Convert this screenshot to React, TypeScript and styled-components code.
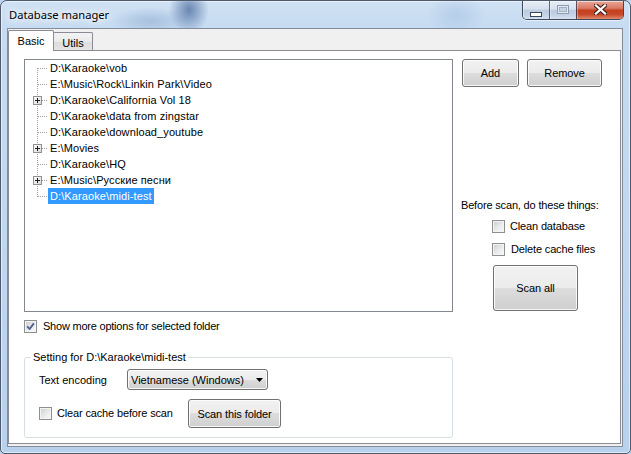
import React from 'react';
import styled, { createGlobalStyle } from 'styled-components';

const Global = createGlobalStyle`
  html, body { margin: 0; padding: 0; background: #bcd4ee; }
  body { font-family: "Liberation Sans", Arial, sans-serif; font-size: 11px; color: #000; }
  #root { width: 631px; height: 454px; }
  * { box-sizing: border-box; }
`;

const Win = styled.div`
  width: 631px;
  height: 454px;
  border: 1px solid #4d5a6c;
  border-radius: 7px 7px 5px 5px;
  background: linear-gradient(180deg, #c7dcf2 0%, #bfd7ef 55%, #b8d1ec 100%);
  display: flex;
  flex-direction: column;
  overflow: hidden;
  box-shadow: inset 0 0 0 1px rgba(255, 255, 255, 0.55);
`;

const TitleBar = styled.div`
  height: 27px;
  flex: none;
  display: flex;
  justify-content: space-between;
  align-items: flex-start;
  padding: 0 6px 0 7px;
  background:
    radial-gradient(ellipse 20px 24px at 188px 9px, rgba(62, 96, 150, 0.7), rgba(62, 96, 150, 0) 100%),
    radial-gradient(ellipse 40px 14px at 150px 20px, rgba(90, 125, 175, 0.3), rgba(90, 125, 175, 0) 100%),
    radial-gradient(ellipse 30px 22px at 455px 14px, rgba(120, 158, 205, 0.25), rgba(120, 158, 205, 0) 100%),
    linear-gradient(180deg, rgba(255, 255, 255, 0.15), rgba(255, 255, 255, 0));
`;

const Title = styled.div`
  font-family: "Noto Sans", "Open Sans", sans-serif;
  font-size: 11.2px;
  line-height: 16px;
  margin-top: 6px;
  padding-left: 1px;
  color: #000;
  text-shadow: 0 0 6px #fff, 0 0 10px #fff, 0 0 14px rgba(255, 255, 255, 0.9);
`;

const CapGroup = styled.div`
  display: flex;
  height: 19px;
  border: 1px solid rgba(36, 48, 68, 0.85);
  border-top: none;
  border-radius: 0 0 5px 5px;
  overflow: hidden;
  box-shadow: 0 1px 0 rgba(255, 255, 255, 0.55);
`;

const CapBtn = styled.div<{ $w: number; $close?: boolean }>`
  width: ${(p) => p.$w}px;
  display: flex;
  align-items: center;
  justify-content: center;
  background: ${(p) =>
    p.$close
      ? 'linear-gradient(180deg, #e8a697 0%, #d97a65 40%, #c4401f 52%, #c9482a 75%, #e08a6c 100%)'
      : 'linear-gradient(180deg, #e6edf6 0%, #d6e1ee 45%, #bccbdf 52%, #c4d3e6 80%, #d4e1f0 100%)'};
  box-shadow: inset 0 1px 0 rgba(255, 255, 255, 0.55), inset 1px 0 0 rgba(255, 255, 255, 0.35);
  & + & {
    border-left: 1px solid rgba(36, 48, 68, 0.7);
  }
`;

const Client = styled.div`
  margin: 0 7px 6px 6px;
  border: 1px solid #828c9a;
  background: #f0f0f0;
  flex: 1;
  min-height: 0;
  display: flex;
  flex-direction: column;
`;

const TabStrip = styled.div`
  display: flex;
  align-items: flex-start;
  height: 22px;
  padding-top: 1px;
  position: relative;
  z-index: 1;
  flex: none;
`;

const Tab = styled.div<{ $active?: boolean; $w: number }>`
  width: ${(p) => p.$w}px;
  height: ${(p) => (p.$active ? 21 : 18)}px;
  margin-top: ${(p) => (p.$active ? 0 : 2)}px;
  margin-left: ${(p) => (p.$active ? 0 : -1)}px;
  border: 1px solid #898c95;
  border-bottom: none;
  border-radius: 2px 2px 0 0;
  background: ${(p) => (p.$active ? '#ffffff' : 'linear-gradient(180deg, #f3f3f3 0%, #ebebeb 50%, #dddddd 51%, #e4e4e4 100%)')};
  position: relative;
  z-index: ${(p) => (p.$active ? 2 : 1)};
  display: flex;
  justify-content: center;
  align-items: center;
  padding-top: ${(p) => (p.$active ? 0 : 2)}px;
  font-size: 11px;
`;

const Page = styled.div`
  margin: -1px 1px 2px 0;
  border: 1px solid #898c95;
  background: #fff;
  flex: 1;
  min-height: 0;
  padding: 8px 0 0 15px;
  display: flex;
  flex-direction: column;
`;

const TopRow = styled.div`
  display: flex;
  gap: 9px;
`;

const Tree = styled.div`
  width: 429px;
  height: 253px;
  border: 1px solid #828790;
  background: #fff;
  display: flex;
  flex-direction: column;
`;

const TreeRow = styled.div`
  display: flex;
  align-items: center;
  height: 16px;
`;

const TreeLabel = styled.span<{ $selected?: boolean }>`
  padding: 0 2px;
  line-height: 16px;
  height: 16px;
  white-space: nowrap;
  font-size: 11px;
  letter-spacing: 0.1px;
  background: ${(p) => (p.$selected ? '#3399ff' : 'transparent')};
  color: ${(p) => (p.$selected ? '#fff' : '#000')};
`;

const Side = styled.div`
  width: 141px;
  display: flex;
  flex-direction: column;
`;

const BtnRow = styled.div`
  display: flex;
  gap: 8px;
`;

const Btn = styled.button<{ $w: number; $h: number }>`
  width: ${(p) => p.$w}px;
  height: ${(p) => p.$h}px;
  border: 1px solid #707070;
  border-radius: 3px;
  padding: 0;
  margin: 0;
  background: linear-gradient(180deg, #f2f2f2 0%, #ebebeb 50%, #dddddd 50%, #cfcfcf 100%);
  box-shadow: inset 0 0 0 1px rgba(255, 255, 255, 0.85);
  font-family: "Liberation Sans", Arial, sans-serif;
  font-size: 11px;
  letter-spacing: -0.1px;
  color: #000;
  flex: none;
`;

const ScanSection = styled.div`
  margin-top: auto;
  margin-bottom: 1px;
  display: flex;
  flex-direction: column;
  padding-left: 30px;
`;

const ScanNote = styled.div`
  margin-left: -31px;
  line-height: 13px;
  height: 13px;
  white-space: nowrap;
  letter-spacing: -0.17px;
  margin-bottom: 8px;
`;

const CheckRow = styled.label<{ $gap?: number; $mt?: number; $w?: number }>`
  display: flex;
  align-items: center;
  gap: ${(p) => p.$gap ?? 5}px;
  height: 13px;
  line-height: 13px;
  margin-top: ${(p) => p.$mt ?? 0}px;
  width: ${(p) => (p.$w ? `${p.$w}px` : 'auto')};
  white-space: nowrap;
  letter-spacing: -0.15px;
  flex: none;
`;

const Box = styled.span`
  width: 13px;
  height: 13px;
  flex: none;
  border: 1px solid #8e8f8f;
  padding: 1px;
  background: linear-gradient(135deg, #cfd1d4 0%, #e9eaeb 55%, #f8f8f8 100%) content-box, #f4f4f4;
  display: flex;
  align-items: center;
  justify-content: center;
`;

const ShowMore = styled(CheckRow)`
  margin-top: 8px;
  letter-spacing: -0.22px;
`;

const Group = styled.fieldset`
  width: 429px;
  margin: 18px 0 0 0;
  padding: 0 0 9px 0;
  border: 1px solid #d5dfe5;
  border-radius: 3px;
  min-width: 0;
`;

const Legend = styled.legend`
  margin-left: 6px;
  padding: 0 2px;
  line-height: 13px;
  font-size: 11px;
`;

const GroupBody = styled.div`
  padding: 5px 0 0 14px;
  display: flex;
  flex-direction: column;
`;

const FieldRow = styled.div<{ $mt?: number }>`
  display: flex;
  align-items: center;
  margin-top: ${(p) => p.$mt ?? 0}px;
`;

const FieldLabel = styled.span`
  width: 88px;
  flex: none;
`;

const Combo = styled.div`
  width: 141px;
  height: 21px;
  border: 1px solid #707070;
  border-radius: 3px;
  background: linear-gradient(180deg, #f2f2f2 0%, #ebebeb 50%, #dddddd 50%, #cfcfcf 100%);
  box-shadow: inset 0 0 0 1px rgba(255, 255, 255, 0.85);
  display: flex;
  align-items: center;
  justify-content: space-between;
  padding: 0 4px 0 3px;
  white-space: nowrap;
`;

const Check = () => (
  <svg width="9" height="9" viewBox="0 0 9 9">
    <path d="M1.2 4.4 L3.6 7 L7.9 1.4" fill="none" stroke="#4a5f8c" strokeWidth="1.8" strokeLinejoin="round" />
  </svg>
);

const CheckBox = ({ checked }: { checked?: boolean }) => <Box>{checked ? <Check /> : null}</Box>;

type Item = { label: string; plus?: boolean; selected?: boolean };

const items: Item[] = [
  { label: 'D:\\Karaoke\\vob' },
  { label: 'E:\\Music\\Rock\\Linkin Park\\Video' },
  { label: 'D:\\Karaoke\\California Vol 18', plus: true },
  { label: 'D:\\Karaoke\\data from zingstar' },
  { label: 'D:\\Karaoke\\download_youtube' },
  { label: 'E:\\Movies', plus: true },
  { label: 'D:\\Karaoke\\HQ' },
  { label: 'E:\\Music\\Русские песни', plus: true },
  { label: 'D:\\Karaoke\\midi-test', selected: true },
];

const Gutter = ({ first, last, plus }: { first: boolean; last: boolean; plus?: boolean }) => (
  <svg width="23" height="16" viewBox="0 0 23 16" style={{ flex: 'none', display: 'block' }}>
    <line x1="12.5" y1={first ? 8 : 0} x2="12.5" y2={last ? 9 : 16} stroke="#a0a0a0" strokeDasharray="1 1" />
    <line x1={plus ? 17 : 13} y1="8.5" x2="23" y2="8.5" stroke="#a0a0a0" strokeDasharray="1 1" />
    {plus && (
      <g>
        <defs>
          <linearGradient id="pg" x1="0" y1="0" x2="1" y2="1">
            <stop offset="0" stopColor="#ffffff" />
            <stop offset="1" stopColor="#d8d8d8" />
          </linearGradient>
        </defs>
        <rect x="8.5" y="4.5" width="8" height="8" fill="url(#pg)" stroke="#919191" />
        <line x1="10" y1="8.5" x2="15" y2="8.5" stroke="#1e1e1e" />
        <line x1="12.5" y1="6" x2="12.5" y2="11" stroke="#1e1e1e" />
      </g>
    )}
  </svg>
);

export default function App() {
  return (
    <>
      <Global />
      <Win>
        <TitleBar>
          <Title>Database manager</Title>
          <CapGroup>
            <CapBtn $w={26}>
              <svg width="12" height="5" viewBox="0 0 12 5" style={{ marginTop: 8 }}>
                <rect x="0.5" y="0.5" width="11" height="4" fill="#fff" stroke="#3a4658" />
              </svg>
            </CapBtn>
            <CapBtn $w={27}>
              <svg width="12" height="9" viewBox="0 0 12 9" style={{ marginTop: -2 }}>
                <rect x="0.5" y="0.5" width="11" height="8" fill="#e3eaf3" stroke="#8e9cb0" />
                <rect x="2.5" y="2.5" width="7" height="4" fill="#c6d3e3" stroke="#a4b1c3" />
              </svg>
            </CapBtn>
            <CapBtn $w={47} $close>
              <svg width="13" height="11" viewBox="0 0 13 11" style={{ marginTop: -1 }}>
                <path d="M2 1.5 L11 9.5 M11 1.5 L2 9.5" stroke="#47201a" strokeWidth="4.4" strokeLinecap="square" />
                <path d="M2 1.5 L11 9.5 M11 1.5 L2 9.5" stroke="#ffffff" strokeWidth="2.3" strokeLinecap="square" />
              </svg>
            </CapBtn>
          </CapGroup>
        </TitleBar>
        <Client>
          <TabStrip>
            <Tab $active $w={46}>Basic</Tab>
            <Tab $w={40}>Utils</Tab>
          </TabStrip>
          <Page>
            <TopRow>
              <Tree>
                {items.map((it, i) => (
                  <TreeRow key={i}>
                    <Gutter first={i === 0} last={i === items.length - 1} plus={it.plus} />
                    <TreeLabel $selected={it.selected}>{it.label}</TreeLabel>
                  </TreeRow>
                ))}
              </Tree>
              <Side>
                <BtnRow>
                  <Btn $w={57} $h={28}>Add</Btn>
                  <Btn $w={75} $h={28}>Remove</Btn>
                </BtnRow>
                <ScanSection>
                  <ScanNote>Before scan, do these things:</ScanNote>
                  <CheckRow>
                    <CheckBox />
                    Clean database
                  </CheckRow>
                  <CheckRow $mt={10} $gap={6}>
                    <CheckBox />
                    Delete cache files
                  </CheckRow>
                  <Btn $w={85} $h={46} style={{ marginTop: 9, marginLeft: 1 }}>
                    Scan all
                  </Btn>
                </ScanSection>
              </Side>
            </TopRow>
            <ShowMore $gap={6}>
              <CheckBox checked />
              Show more options for selected folder
            </ShowMore>
            <Group>
              <Legend>Setting for D:\Karaoke\midi-test</Legend>
              <GroupBody>
                <FieldRow>
                  <FieldLabel>Text encoding</FieldLabel>
                  <Combo>
                    <span>Vietnamese (Windows)</span>
                    <svg width="7" height="4" viewBox="0 0 7 4">
                      <path d="M0 0 H7 L3.5 4 Z" fill="#000" />
                    </svg>
                  </Combo>
                </FieldRow>
                <FieldRow $mt={9}>
                  <CheckRow $w={149} $gap={5}>
                    <CheckBox />
                    Clear cache before scan
                  </CheckRow>
                  <Btn $w={93} $h={29}>Scan this folder</Btn>
                </FieldRow>
              </GroupBody>
            </Group>
          </Page>
        </Client>
      </Win>
    </>
  );
}
